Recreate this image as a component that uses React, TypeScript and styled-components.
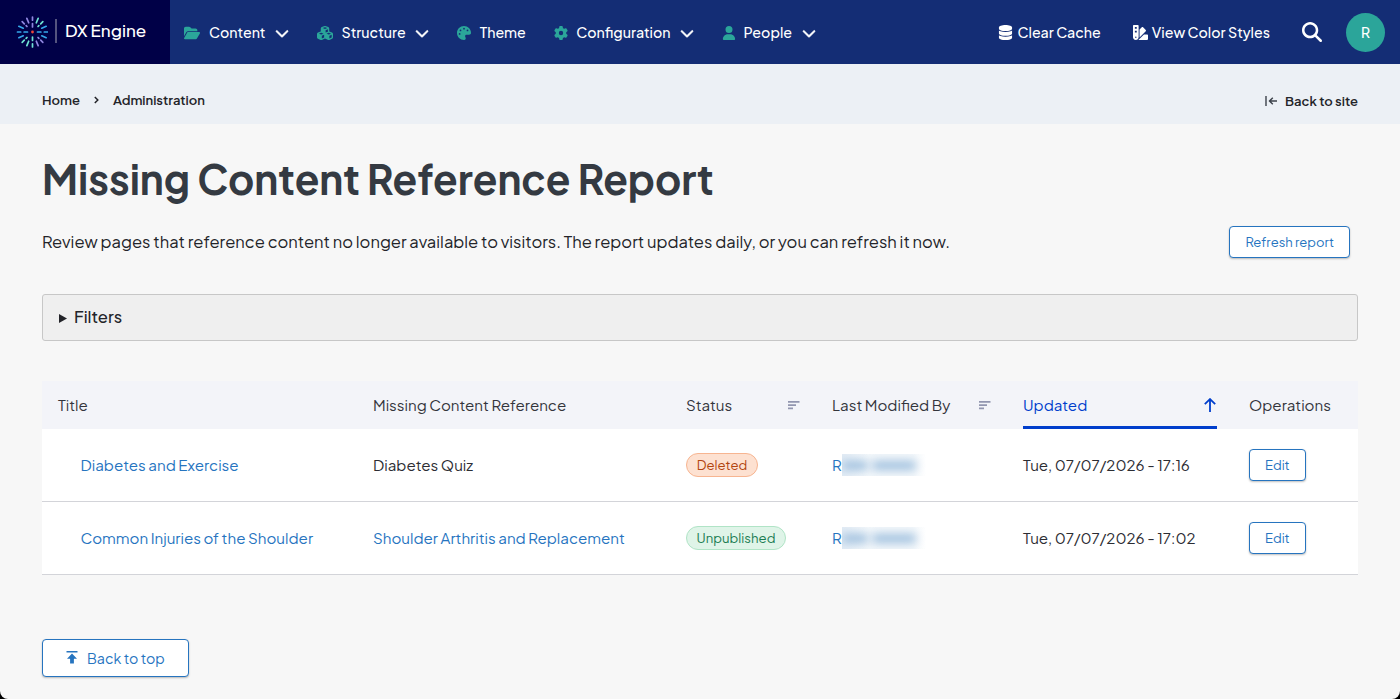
import type { ComponentType } from "react"
import styled, { createGlobalStyle } from "styled-components"
import {
  FaChevronDown,
  FaCubes,
  FaDatabase,
  FaFolderOpen,
  FaGear,
  FaMagnifyingGlass,
  FaPalette,
  FaSwatchbook,
  FaUser,
} from "react-icons/fa6"

const GlobalStyle = createGlobalStyle`
  * {
    box-sizing: border-box;
  }

  body {
    margin: 0;
    background: #000;
    color: #232429;
    font-family: "Plus Jakarta Sans", Inter, sans-serif;
    overflow: hidden;
  }

  a {
    color: inherit;
    text-decoration: none;
  }

  button {
    font-family: inherit;
    cursor: pointer;
  }
`

const Page = styled.div`
  height: 100vh;
  background: #f7f7f7;
  border-radius: 0 0 8px 8px;
  overflow: hidden;
`

const Toolbar = styled.header`
  display: flex;
  align-items: center;
  height: 64px;
  padding-right: 15px;
  background: #142d75;
  color: #fff;
`

const Brand = styled.a`
  display: flex;
  align-items: center;
  width: 170px;
  height: 64px;
  padding-left: 16px;
  background: #000047;
`

const BrandName = styled.span`
  margin: -2px 0 0 7px;
  padding: 0 0 2px 8px;
  border-left: 2px solid #54547f;
  font-size: 17px;
  font-weight: 500;
  line-height: 22px;
`

const Nav = styled.nav`
  display: flex;
  align-items: center;
  gap: 28px;
  margin-left: 14px;
`

const NavItem = styled.a<{ $gap: number }>`
  display: flex;
  align-items: center;
  font-size: 14.22px;
  font-weight: 500;
  line-height: 20px;
  white-space: nowrap;

  > svg:first-child {
    margin: 1px ${(props) => props.$gap}px 0 0;
    color: #2ba69a;
  }
`

const Caret = styled(FaChevronDown)`
  margin: 2px 0 0 9.5px;
  stroke: currentColor;
  stroke-width: 16px;
`

const Actions = styled.div`
  display: flex;
  align-items: center;
  margin-left: auto;
`

const Action = styled.a`
  display: flex;
  align-items: center;
  gap: 4px;
  margin-right: 32px;
  font-size: 14.22px;
  font-weight: 500;
  line-height: 20px;
  white-space: nowrap;
`

const Avatar = styled.div`
  display: flex;
  align-items: center;
  justify-content: center;
  width: 39px;
  height: 39px;
  margin-left: 24px;
  border-radius: 50%;
  background: #2ba59a;
  font-size: 14px;
  font-weight: 500;
`

const BreadcrumbBar = styled.div`
  display: flex;
  align-items: center;
  justify-content: space-between;
  height: 60px;
  padding: 13px 42px 0;
  background: #ecf0f5;
  font-size: 13px;
  font-weight: 600;
  line-height: 20px;
`

const Breadcrumb = styled.nav`
  display: flex;
  align-items: center;
  gap: 14px;
  padding-bottom: 2px;
`

const BackLink = styled.a`
  display: flex;
  align-items: center;
  gap: 8px;
  padding-top: 1px;
`

const Main = styled.main`
  padding: 0 42px;
`

const Title = styled.h1`
  margin: 0;
  padding-top: 30px;
  color: #343a42;
  font-size: 40.35px;
  font-weight: 700;
  line-height: 50px;
`

const Intro = styled.div`
  display: flex;
  align-items: center;
  justify-content: space-between;
  margin-top: 22px;
  padding-right: 8px;
`

const Description = styled.p`
  margin: 0;
  font-size: 16.53px;
  line-height: 24px;
`

const Button = styled.button<{ $size: "small" | "large" }>`
  display: inline-flex;
  align-items: center;
  justify-content: center;
  gap: 9px;
  height: ${(props) => (props.$size === "large" ? 38 : 32)}px;
  padding: 0 ${(props) => (props.$size === "large" ? "23px 1px" : "15px")};
  border: 1px solid #2674bf;
  border-radius: 4px;
  background: #fff;
  box-shadow: 0 1px 2px rgba(0, 0, 0, 0.25);
  color: #2674bf;
  font-size: ${(props) => (props.$size === "large" ? 14.22 : 13)}px;
  white-space: nowrap;
`

const Filters = styled.details`
  height: 47px;
  margin-top: 36px;
  border: 1px solid #c7c7c7;
  border-radius: 3px;
  background: #efefef;

  summary {
    display: flex;
    align-items: center;
    height: 45px;
    padding: 0 0 2px 16px;
    font-size: 16.53px;
    font-weight: 500;
    list-style: none;
  }

  svg {
    margin: 4px 7px 0 0;
  }
`

const Table = styled.table`
  width: 1316px;
  margin-top: 40px;
  border-collapse: separate;
  border-spacing: 0;
  table-layout: fixed;
  color: #2c2d33;
  font-size: 15.13px;
  font-weight: 400;
  line-height: 20px;
  text-align: left;
`

const HeadCell = styled.th<{ $width: number }>`
  width: ${(props) => props.$width}px;
  height: 48px;
  padding: 0 16px;
  background: #f3f4f9;
  color: #33353c;
  font-weight: 400;
  white-space: nowrap;
`

const HeadInner = styled.div<{ $active?: boolean }>`
  display: flex;
  align-items: center;
  justify-content: space-between;
  height: 48px;
  color: ${(props) => (props.$active ? "#003ecc" : "inherit")};
  box-shadow: ${(props) => (props.$active ? "inset 0 -3px 0 #003ecc" : "none")};
`

const Cell = styled.td<{ $indent?: boolean }>`
  height: 73px;
  padding: 0 0 0 ${(props) => (props.$indent ? 38.5 : 16)}px;
  border-bottom: 1px solid #d3d4d9;
  background: #fff;
  white-space: nowrap;
`

const Link = styled.a`
  color: #2674bf;
`

const Badge = styled.span<{ $tone: "deleted" | "unpublished" }>`
  display: flex;
  align-items: center;
  justify-content: center;
  width: ${(props) => (props.$tone === "deleted" ? 72 : 100)}px;
  height: 24px;
  border: 1px solid ${(props) => (props.$tone === "deleted" ? "#f7b591" : "#b0e4c6")};
  border-radius: 12px;
  background: ${(props) => (props.$tone === "deleted" ? "#fde1d1" : "#dff4e8")};
  color: ${(props) => (props.$tone === "deleted" ? "#b2450f" : "#1b7d52")};
  font-size: 13.15px;
`

const Author = styled.div`
  display: flex;
  align-items: center;
`

const Redacted = styled.span`
  display: flex;
  align-items: center;
  gap: 4px;
  width: 84px;
  height: 22px;
  overflow: hidden;
  background: linear-gradient(90deg, #e3ecf5, #f4f8fb 30%, #f4f8fb 85%, #fff);
`

const Smudge = styled.i<{ $width: number }>`
  width: ${(props) => props.$width}px;
  height: 9px;
  border-radius: 4px;
  background: #9dbedd;
  filter: blur(5px);
`

const Footer = styled.div`
  margin-top: 64px;
`

type Icon = ComponentType<{ size?: number }>

const navItems: { label: string; icon: Icon; size: number; gap: number; menu: boolean }[] = [
  { label: "Content", icon: FaFolderOpen, size: 16, gap: 9, menu: true },
  { label: "Structure", icon: FaCubes, size: 16, gap: 8.5, menu: true },
  { label: "Theme", icon: FaPalette, size: 14, gap: 8.5, menu: false },
  { label: "Configuration", icon: FaGear, size: 14, gap: 8.5, menu: true },
  { label: "People", icon: FaUser, size: 14, gap: 7.5, menu: true },
]

const rows = [
  {
    title: "Diabetes and Exercise",
    reference: "Diabetes Quiz",
    status: "Deleted",
    tone: "deleted" as const,
    updated: "Tue, 07/07/2026 - 17:16",
    linked: false,
  },
  {
    title: "Common Injuries of the Shoulder",
    reference: "Shoulder Arthritis and Replacement",
    status: "Unpublished",
    tone: "unpublished" as const,
    updated: "Tue, 07/07/2026 - 17:02",
    linked: true,
  },
]

const burstColors = [
  "#8f86e0", "#6fe3d3", "#6fe3d3", "#35a8ea", "#35a8ea", "#35a8ea", "#8f86e0", "#8f86e0",
  "#6fe3d3", "#6fe3d3", "#6fe3d3", "#35a8ea", "#35a8ea", "#35a8ea", "#8f86e0", "#8f86e0",
]

// long single rays between the axes, split rays on the axes and diagonals
const rayPath = (i: number) => {
  if (i % 2 === 1) return "M0 -10V-14.8"
  return i % 4 === 0 ? "M0 -5V-8.4M0 -11.8V-15" : "M0 -7.8V-9M0 -11.6V-14.6"
}

function Logo() {
  return (
    <svg width="32" height="32" viewBox="-16.5 -16 32 32">
      {burstColors.map((color, i) => (
        <path
          key={i}
          d={rayPath(i)}
          transform={`rotate(${i * 22.5})`}
          stroke={color}
          strokeWidth="1.7"
          strokeLinecap="round"
        />
      ))}
      <circle r="1.4" fill="#f0453a" />
    </svg>
  )
}

function SortIcon() {
  return (
    <svg width="12" height="9" viewBox="0 0 12 9" fill="#9296b0">
      <path d="M0 0h11.5v1.8H0zM0 3.3h8v1.8H0zM0 6.5h5v1.8H0z" />
    </svg>
  )
}

export default function App() {
  return (
    <Page>
      <GlobalStyle />
      <Toolbar>
        <Brand href="#">
          <Logo />
          <BrandName>DX Engine</BrandName>
        </Brand>
        <Nav>
          {navItems.map(({ label, icon: ItemIcon, size, gap, menu }) => (
            <NavItem key={label} href="#" $gap={gap}>
              <ItemIcon size={size} />
              <span>{label}</span>
              {menu && <Caret size={14} />}
            </NavItem>
          ))}
        </Nav>
        <Actions>
          <Action href="#">
            <FaDatabase size={15} />
            <span>Clear Cache</span>
          </Action>
          <Action href="#">
            <FaSwatchbook size={15} />
            <span>View Color Styles</span>
          </Action>
          <FaMagnifyingGlass size={20} />
          <Avatar>R</Avatar>
        </Actions>
      </Toolbar>

      <BreadcrumbBar>
        <Breadcrumb>
          <a href="#">Home</a>
          <svg width="5" height="8" viewBox="0 0 5 8" fill="none" stroke="#232429" strokeWidth="1.5">
            <path d="M0.8 1L3.8 4L0.8 7" />
          </svg>
          <a href="#">Administration</a>
        </Breadcrumb>
        <BackLink href="#">
          <svg width="12" height="12" viewBox="0 0 12 12" fill="none" stroke="#3c414a" strokeWidth="1.4">
            <path d="M1 1V11M12 6H4.4M7.8 2.8L4.5 6L7.8 9.2" />
          </svg>
          Back to site
        </BackLink>
      </BreadcrumbBar>

      <Main>
        <Title>Missing Content Reference Report</Title>
        <Intro>
          <Description>
            Review pages that reference content no longer available to visitors. The report updates daily, or you can refresh it now.
          </Description>
          <Button $size="small">Refresh report</Button>
        </Intro>

        <Filters>
          <summary>
            <svg width="8" height="9" viewBox="0 0 8 9" fill="#232429">
              <path d="M0 0L8 4.5L0 9z" />
            </svg>
            Filters
          </summary>
        </Filters>

        <Table>
          <thead>
            <tr>
              <HeadCell $width={315}>Title</HeadCell>
              <HeadCell $width={313}>Missing Content Reference</HeadCell>
              <HeadCell $width={146}>
                <HeadInner>
                  Status
                  <SortIcon />
                </HeadInner>
              </HeadCell>
              <HeadCell $width={191}>
                <HeadInner>
                  Last Modified By
                  <SortIcon />
                </HeadInner>
              </HeadCell>
              <HeadCell $width={226}>
                <HeadInner $active>
                  Updated
                  <svg width="14" height="14" viewBox="0 0 14 14" fill="none" stroke="#003ecc" strokeWidth="1.8">
                    <path d="M7 14V1M1.8 6.2L7 1.1L12.2 6.2" />
                  </svg>
                </HeadInner>
              </HeadCell>
              <HeadCell $width={125}>Operations</HeadCell>
            </tr>
          </thead>
          <tbody>
            {rows.map((row) => (
              <tr key={row.title}>
                <Cell $indent>
                  <Link href="#">{row.title}</Link>
                </Cell>
                <Cell>{row.linked ? <Link href="#">{row.reference}</Link> : row.reference}</Cell>
                <Cell>
                  <Badge $tone={row.tone}>{row.status}</Badge>
                </Cell>
                <Cell>
                  <Author>
                    <Link href="#">R</Link>
                    <Redacted>
                      <Smudge $width={26} />
                      <Smudge $width={44} />
                    </Redacted>
                  </Author>
                </Cell>
                <Cell>{row.updated}</Cell>
                <Cell>
                  <Button $size="small">Edit</Button>
                </Cell>
              </tr>
            ))}
          </tbody>
        </Table>

        <Footer>
          <Button $size="large">
            <svg width="12" height="13" viewBox="0 0 12 13" fill="#2674bf">
              <path d="M0.5 0h11v1.4H0.5zM6 2.4L11 7.8H7.9V12.6H4.1V7.8H1z" />
            </svg>
            Back to top
          </Button>
        </Footer>
      </Main>
    </Page>
  )
}
